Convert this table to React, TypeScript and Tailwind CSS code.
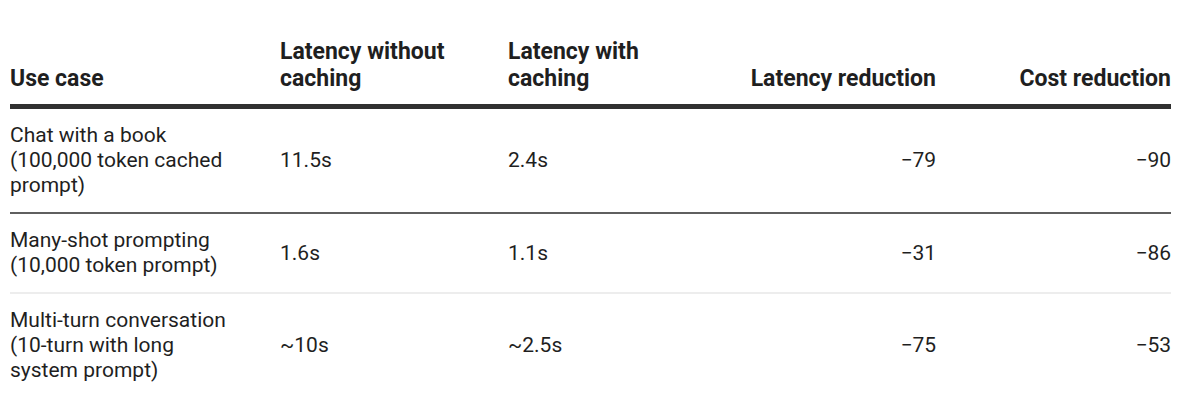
const rows = [
  { useCase: 'Chat with a book (100,000 token cached prompt)', without: '11.5s', with: '2.4s', latency: '−79', cost: '−90', border: 'border-b-2 border-[#5f5f5f]' },
  { useCase: 'Many-shot prompting (10,000 token prompt)', without: '1.6s', with: '1.1s', latency: '−31', cost: '−86', border: 'border-b-2 border-[#ededed]' },
  { useCase: 'Multi-turn conversation (10-turn with long system prompt)', without: '~10s', with: '~2.5s', latency: '−75', cost: '−53', border: '' },
];

export default function App() {
  return (
    <div className="w-[1181px] h-[414px] bg-white px-[10px] pt-[38px] text-[#1f1f1f] font-['Roboto',sans-serif]">
      <table className="w-[1161px] table-fixed border-collapse">
        <colgroup>
          <col className="w-[246px]" />
          <col className="w-[228px]" />
          <col className="w-[226px]" />
          <col className="w-[250px]" />
          <col className="w-[211px]" />
        </colgroup>
        <thead>
          <tr className="border-b-[5px] border-[#303030] text-[23px] leading-[27px] font-bold align-bottom">
            <th className="text-left pr-6 pb-[12px]">Use case</th>
            <th className="text-left px-6 pb-[12px]">Latency without caching</th>
            <th className="text-left px-6 pb-[12px]">Latency with caching</th>
            <th className="text-right px-6 pb-[12px]">Latency reduction</th>
            <th className="text-right pl-6 pb-[12px]">Cost reduction</th>
          </tr>
        </thead>
        <tbody className="text-[21px] leading-[25px]">
          {rows.map((r) => (
            <tr key={r.useCase} className={r.border}>
              <td className="pr-6 py-[14px] align-middle">{r.useCase}</td>
              <td className="px-6 py-[14px] align-middle">{r.without}</td>
              <td className="px-6 py-[14px] align-middle">{r.with}</td>
              <td className="px-6 py-[14px] align-middle text-right">{r.latency}</td>
              <td className="pl-6 py-[14px] align-middle text-right">{r.cost}</td>
            </tr>
          ))}
        </tbody>
      </table>
    </div>
  );
}
